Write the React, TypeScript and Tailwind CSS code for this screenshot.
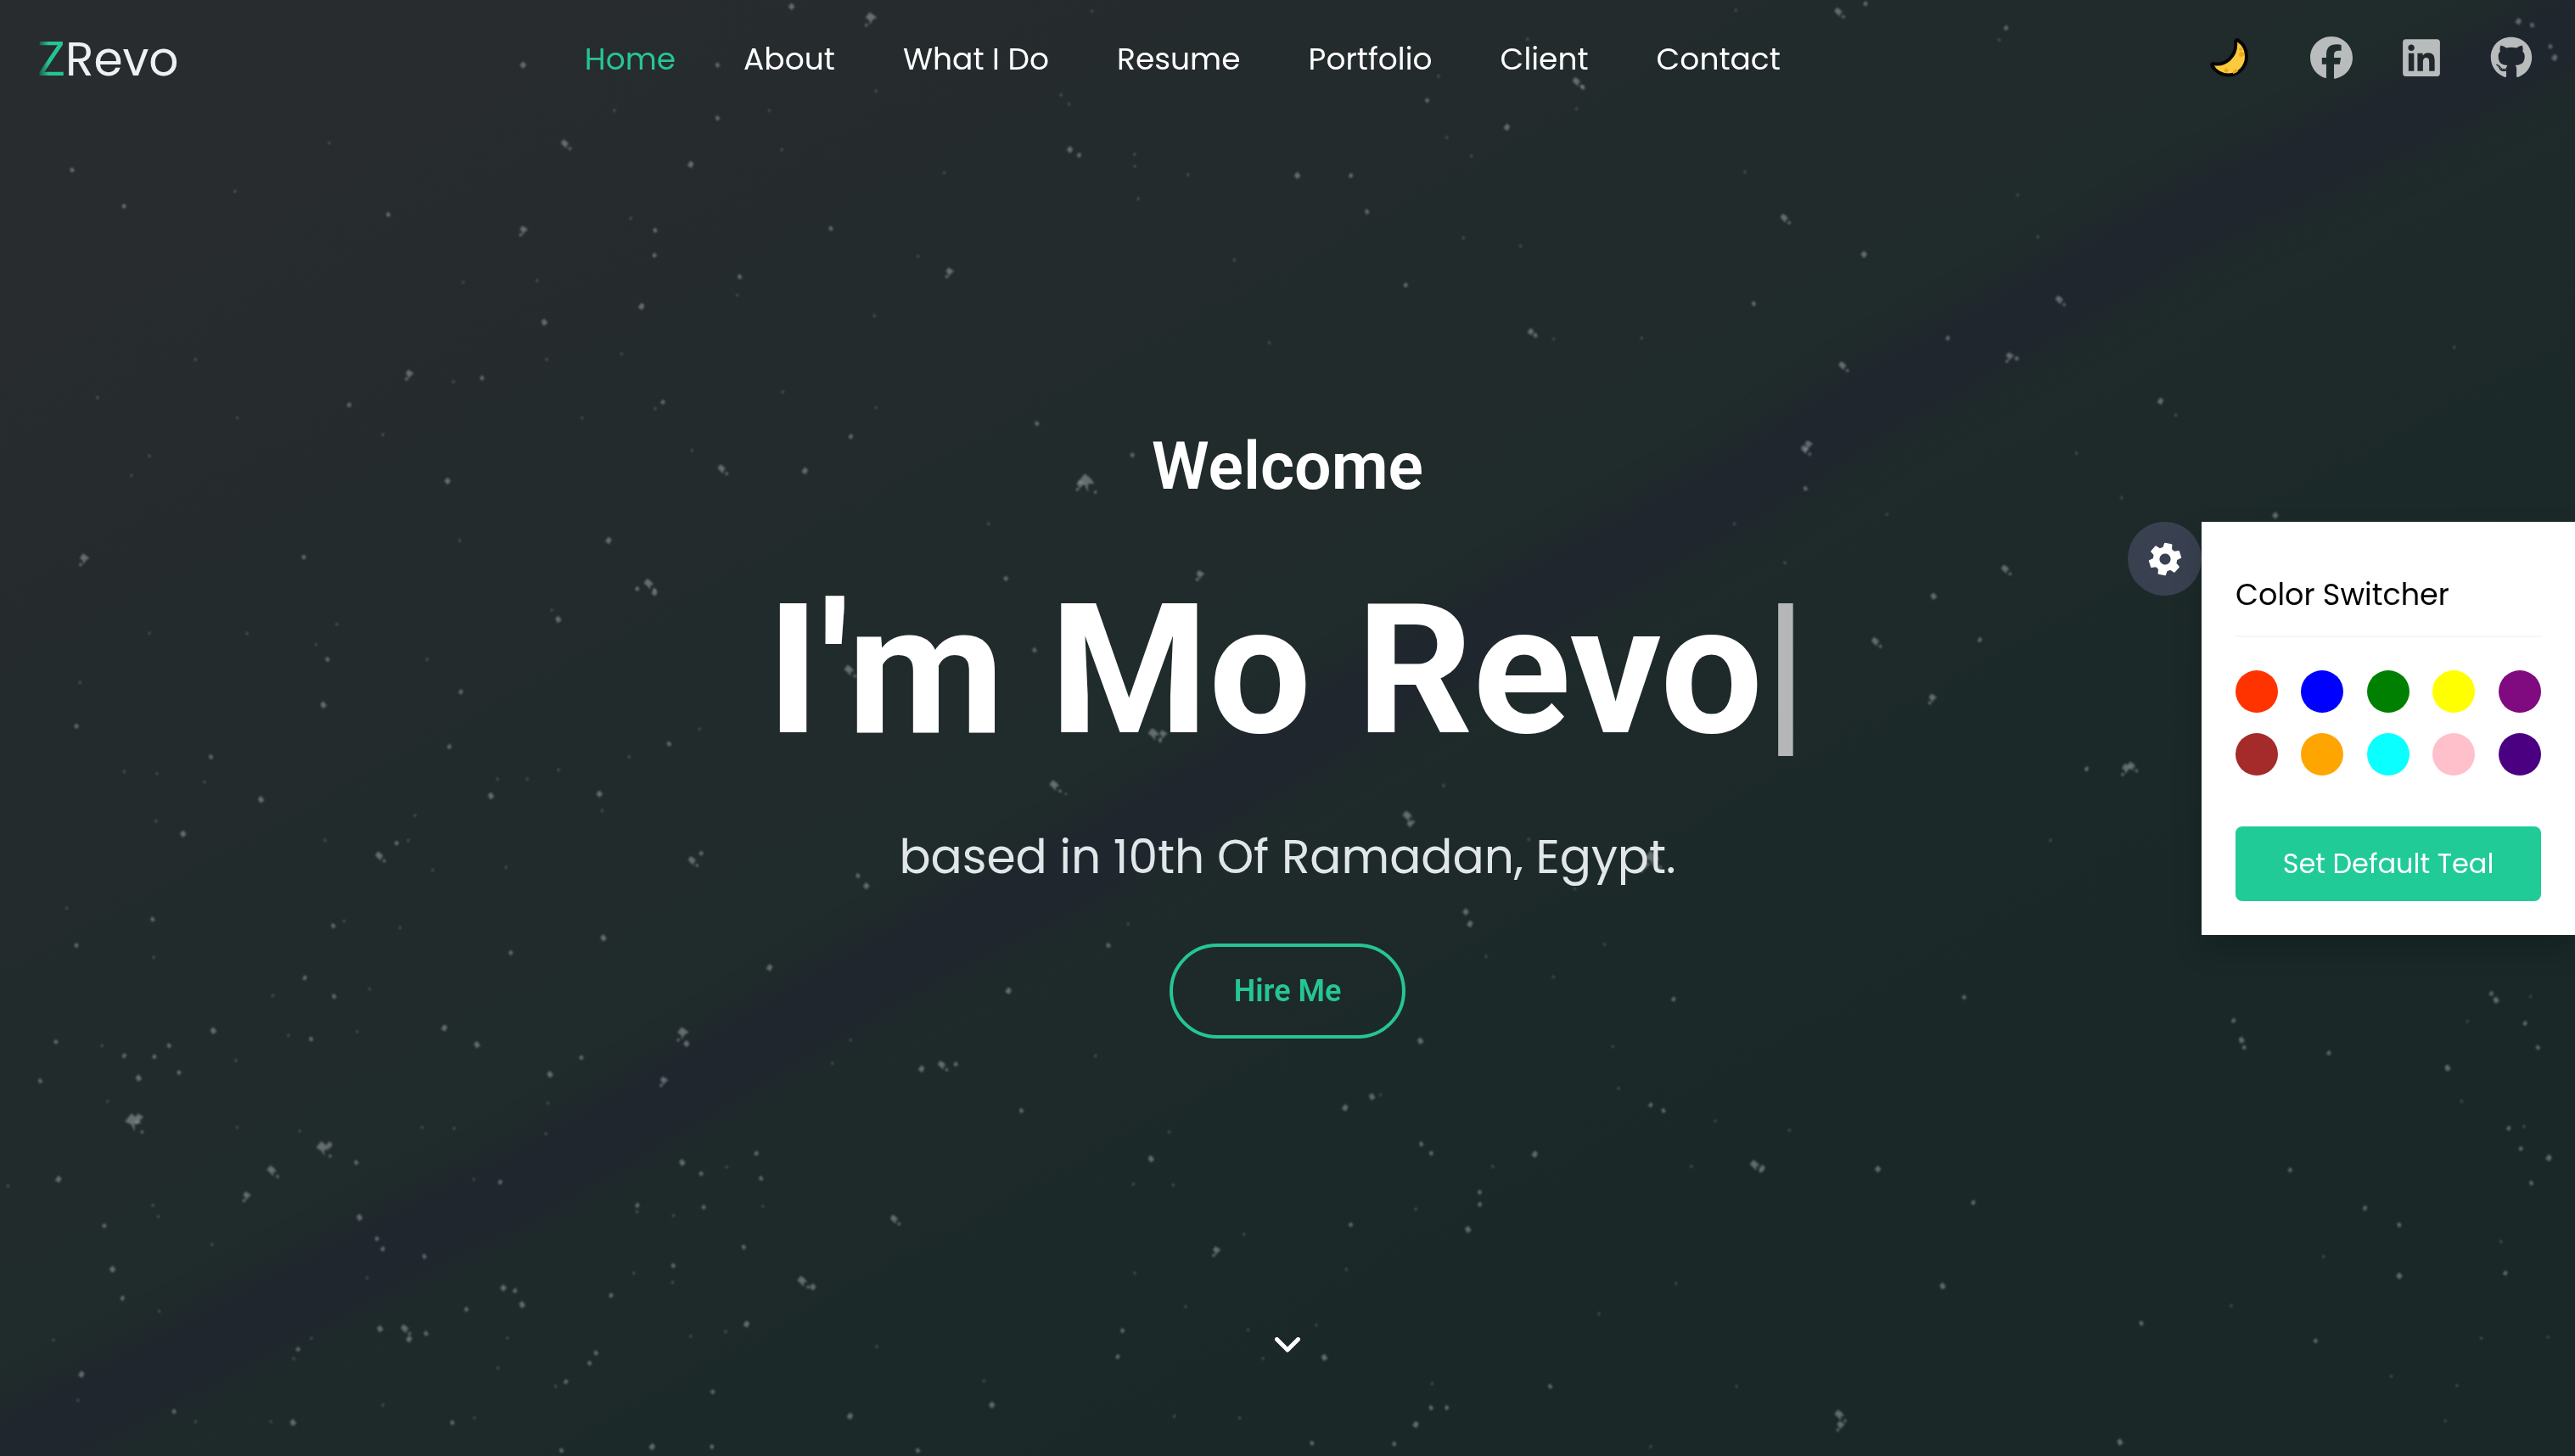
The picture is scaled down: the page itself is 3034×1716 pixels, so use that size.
import { FaGithub, FaLinkedin } from "react-icons/fa";
import { FaFacebook } from "react-icons/fa6";
import { IoSettingsSharp } from "react-icons/io5";

const body = "font-[Poppins,Inter,sans-serif] [font-feature-settings:'cv11']";
const display = "font-[Roboto,sans-serif]";

const links = ["Home", "About", "What I Do", "Resume", "Portfolio", "Client", "Contact"];

const socials = [
  { name: "Facebook", Icon: FaFacebook },
  { name: "LinkedIn", Icon: FaLinkedin },
  { name: "GitHub", Icon: FaGithub },
];

const swatches = [
  { name: "Red", fill: "bg-[#ff3300]" },
  { name: "Blue", fill: "bg-[#0000ff]" },
  { name: "Green", fill: "bg-[#008000]" },
  { name: "Yellow", fill: "bg-[#ffff00]" },
  { name: "Purple", fill: "bg-[#800a80]" },
  { name: "Brown", fill: "bg-[#a52a2a]" },
  { name: "Orange", fill: "bg-[#ffa500]" },
  { name: "Cyan", fill: "bg-[#0affff]" },
  { name: "Pink", fill: "bg-[#ffc0cb]" },
  { name: "Indigo", fill: "bg-[#4b0082]" },
];

// Each star is [x, y, radius] on a 1568 x 1568 tile; the sky is two tiles wide.
type Star = [number, number, number];

const leftStars: Star[] = [
  [88, 183, 3], [151, 222, 3], [286, 206, 2], [473, 231, 3], [401, 154, 2], [638, 248, 5], [688, 155, 5], [637, 70, 4],
  [841, 177, 4], [874, 70, 3], [964, 7, 4], [1061, 20, 7], [874, 127, 3], [937, 119, 2], [748, 119, 2], [1067, 98, 2],
  [1303, 161, 4], [1314, 167, 3], [1382, 166, 2], [1382, 179, 2], [1386, 214, 2], [1447, 188, 2], [1330, 12, 2],
  [1292, 102, 2], [1302, 112, 2], [1150, 186, 2], [952, 161, 2], [1012, 246, 3], [1118, 276, 2], [1157, 293, 5],
  [798, 248, 3], [797, 275, 3], [768, 235, 2], [901, 298, 3], [898, 318, 2], [781, 330, 4], [663, 347, 4], [564, 304, 2],
  [654, 302, 2], [499, 403, 5], [587, 407, 3], [552, 411, 2], [666, 387, 2], [757, 381, 2], [238, 387, 2], [119, 428, 2],
  [289, 450, 2], [425, 436, 3], [182, 491, 2], [160, 512, 2], [807, 433, 3], [798, 440, 2], [709, 450, 2], [953, 422, 2],
  [1065, 340, 2], [1067, 439, 2], [1036, 470, 3], [1263, 456, 3], [1379, 490, 3], [1503, 280, 2], [1546, 369, 2],
  [545, 518, 4], [466, 468, 2], [843, 485, 2], [879, 505, 5], [980, 507, 4], [1323, 520, 10], [1316, 522, 5],
  [741, 582, 4], [560, 582, 2], [370, 600, 3], [103, 602, 6], [790, 629, 6], [776, 634, 3], [797, 638, 4], [1204, 564, 2],
  [1225, 623, 3], [1462, 619, 5], [680, 667, 4], [672, 657, 2], [410, 672, 2], [301, 682, 2], [182, 682, 2], [520, 710, 2],
  [399, 710, 3], [385, 694, 2], [561, 745, 3], [394, 759, 4], [93, 782, 3], [97, 735, 2], [257, 815, 3], [249, 842, 2],
  [547, 804, 3], [815, 801, 3], [852, 785, 2], [766, 815, 2], [606, 839, 2], [642, 839, 2], [680, 829, 2], [598, 857, 4],
  [730, 855, 4], [733, 873, 2], [318, 861, 4], [191, 833, 2], [151, 831, 2], [190, 884, 2], [223, 898, 4], [505, 878, 2],
  [462, 922, 5], [483, 908, 3], [497, 905, 2], [396, 905, 2], [527, 937, 2], [616, 934, 2], [843, 927, 5], [854, 919, 3],
  [1034, 722, 6], [1260, 700, 3], [1405, 791, 7], [1417, 791, 5], [1284, 846, 6], [1298, 855, 2], [81, 978, 2],
  [186, 990, 3], [93, 1018, 3], [187, 1031, 2], [406, 997, 3], [419, 992, 2], [487, 999, 2], [735, 1010, 4], [622, 1026, 3],
  [937, 1042, 4], [1045, 943, 3], [1055, 954, 4], [1228, 1067, 4], [1350, 1018, 3], [1374, 995, 2], [371, 1053, 3],
  [407, 1073, 3], [450, 1065, 2], [332, 1072, 2], [260, 1110, 4], [68, 1122, 3], [124, 1126, 2], [206, 1126, 3],
  [188, 1138, 3], [151, 1137, 3], [169, 1161, 4], [218, 1155, 3], [351, 1115, 2], [379, 1119, 3], [435, 1111, 2],
  [541, 1107, 4], [581, 1125, 4], [162, 1209, 10], [170, 1204, 5], [49, 1164, 3], [131, 1186, 2], [287, 1142, 2],
  [832, 1113, 7], [836, 1124, 4], [809, 1164, 5], [670, 1157, 4], [708, 1139, 3], [667, 1188, 2], [1014, 1145, 2],
  [1036, 1120, 2], [1122, 1151, 4], [1147, 1147, 5], [1164, 1146, 3], [1334, 1137, 2], [1244, 1196, 3], [393, 1237, 8],
  [401, 1233, 4], [434, 1252, 3], [365, 1218, 2], [331, 1261, 6], [301, 1288, 5], [289, 1214, 2], [71, 1270, 4],
  [10, 1277, 2], [127, 1320, 3], [186, 1298, 2], [193, 1310, 2], [137, 1367, 4], [258, 1340, 2], [438, 1311, 4],
  [459, 1334, 3], [466, 1345, 3], [517, 1353, 3], [514, 1214, 2], [553, 1215, 2], [665, 1221, 2], [577, 1270, 2],
  [609, 1273, 3], [831, 1252, 4], [854, 1264, 3], [921, 1242, 3], [927, 1269, 3], [885, 1257, 2], [776, 1298, 3],
  [776, 1305, 2], [857, 1300, 3], [820, 1309, 2], [906, 1343, 3], [929, 1299, 2], [1089, 1313, 5], [1402, 1248, 4],
  [1424, 1219, 2], [1380, 1275, 2], [1429, 1276, 2], [1482, 1347, 5], [1515, 1329, 2], [1382, 1371, 2], [613, 1387, 4],
  [627, 1390, 3], [636, 1405, 4], [568, 1410, 3], [744, 1395, 3], [772, 1371, 2], [820, 1363, 3], [819, 1381, 2],
  [977, 1380, 6], [990, 1386, 4], [909, 1426, 4], [463, 1431, 4], [493, 1431, 5], [498, 1442, 4], [519, 1436, 3],
  [447, 1376, 2], [149, 1398, 3], [194, 1412, 2], [65, 1443, 2], [99, 1480, 4], [95, 1508, 2], [363, 1453, 3],
  [379, 1441, 2], [358, 1463, 2], [212, 1520, 3], [238, 1531, 2], [357, 1532, 4], [330, 1531, 2], [466, 1513, 2],
  [551, 1532, 3], [578, 1527, 2], [689, 1488, 3], [677, 1493, 2], [618, 1441, 2], [606, 1473, 2], [726, 1457, 3],
  [718, 1468, 3], [841, 1439, 2], [884, 1434, 2], [868, 1499, 3], [794, 1558, 4], [684, 1562, 3], [867, 1558, 3],
  [1035, 1525, 4], [1068, 1450, 2], [1208, 1513, 4], [1198, 1487, 2], [1118, 1562, 3], [1367, 1433, 3], [1361, 1461, 3],
  [1444, 1407, 2], [1520, 1432, 2], [1430, 1525, 2], [1510, 1527, 2], [1538, 1463, 2],
];

const rightStars: Star[] = [
  [671, 13, 5], [704, 4, 3], [875, 30, 3], [867, 43, 2], [546, 11, 2], [292, 42, 2], [184, 82, 2], [170, 108, 3],
  [352, 88, 5], [360, 94, 3], [352, 117, 2], [267, 137, 4], [194, 148, 2], [12, 189, 4], [77, 189, 3], [97, 228, 3],
  [224, 168, 2], [214, 256, 2], [284, 265, 2], [144, 307, 3], [296, 357, 4], [302, 361, 3], [324, 365, 2], [431, 364, 2],
  [605, 235, 5], [702, 274, 4], [557, 185, 2], [568, 327, 3], [676, 394, 5], [804, 364, 3], [914, 255, 2], [889, 210, 2],
  [940, 323, 5], [880, 384, 5], [888, 386, 3], [1063, 432, 4], [1082, 447, 2], [1421, 374, 2], [1499, 23, 4],
  [1516, 27, 3], [1538, 50, 3], [1543, 62, 4], [961, 488, 2], [635, 479, 5], [630, 484, 5], [631, 526, 3], [730, 554, 2],
  [544, 564, 2], [1016, 536, 2], [1203, 555, 4], [874, 613, 5], [787, 642, 4], [716, 691, 5], [843, 689, 3],
  [606, 606, 2], [786, 752, 5], [973, 828, 3], [1022, 828, 6], [1028, 825, 5], [929, 905, 2], [146, 879, 6],
  [149, 887, 4], [190, 846, 2], [294, 904, 2], [444, 925, 9], [436, 932, 6], [350, 957, 2], [217, 982, 4], [222, 995, 4],
  [242, 1030, 2], [386, 1017, 2], [470, 1076, 3], [324, 1052, 2], [396, 1127, 2], [403, 1172, 2], [162, 1121, 4],
  [824, 1074, 3], [70, 1193, 4], [103, 1181, 4], [113, 1179, 2], [442, 1190, 3], [458, 1196, 3], [521, 1207, 2],
  [611, 1217, 2], [163, 1232, 3], [175, 1242, 3], [301, 1243, 4], [250, 1256, 2], [234, 1284, 3], [234, 1297, 3],
  [220, 1324, 4], [77, 1319, 3], [156, 1302, 2], [72, 1367, 2], [569, 1255, 6], [578, 1258, 4], [492, 1256, 2],
  [719, 1259, 4], [835, 1295, 3], [798, 1385, 4], [473, 1382, 2], [379, 1415, 2], [1040, 1425, 3], [1252, 1444, 3],
  [1149, 1406, 2], [1014, 1553, 4], [672, 1524, 6], [674, 1535, 5], [45, 1462, 4], [35, 1427, 2], [176, 1490, 2],
  [175, 1516, 3], [194, 1516, 3], [156, 1534, 4], [30, 1554, 3], [130, 1555, 3], [442, 1558, 2], [320, 1493, 3],
  [547, 1493, 2], [1152, 1099, 3], [1162, 1120, 4], [1165, 1128, 3], [1466, 1070, 3], [1472, 1077, 4], [1437, 1100, 2],
  [1507, 1102, 3], [1523, 1128, 3], [1514, 1073, 2], [1268, 1134, 3], [1413, 1150, 4], [1430, 1186, 2], [1487, 1215, 3],
  [1506, 1213, 2], [1502, 1237, 3], [1536, 1247, 4], [1515, 1274, 3], [1221, 1260, 3], [1312, 1301, 3], [1354, 1319, 3],
  [1354, 1374, 4], [1483, 1371, 3], [1454, 1441, 2], [1535, 1440, 2], [1424, 1492, 2], [1478, 1337, 2], [1410, 1530, 2],
  [1344, 1482, 2], [1262, 1353, 2],
];

// Small stars are single specks; larger ones are ragged clumps of specks.
function starPath([x, y, r]: Star, i: number) {
  if (r < 5) {
    const lean = (i % 3) - 1;
    return `M${x} ${y - r}L${x + r} ${y - lean}L${x + lean} ${y + r}L${x - r} ${y + lean}Z`;
  }
  const side = i % 2 === 0 ? 1 : -1;
  return (
    `M${x - r} ${y - 1}L${x - 2} ${y - r}L${x + r / 2} ${y - r / 2}L${x + r} ${y + side}` +
    `L${x + 2} ${y + 1}L${x + side * 2} ${y + r}L${x - 2} ${y + 2}Z` +
    `M${x + side * r} ${y + r - 2}l3 1l-1 3l-3 -1Z`
  );
}

function Stars({ stars, x }: { stars: Star[]; x: number }) {
  return (
    <svg x={x} width="1517" height="1716" viewBox="0 0 1568 1568" preserveAspectRatio="none">
      {stars.map((star, i) => (
        <path key={i} d={starPath(star, i)} opacity={star[2] < 3 ? 0.3 : 0.48} />
      ))}
    </svg>
  );
}

function NightSky() {
  return (
    <svg
      aria-hidden="true"
      className="absolute inset-0 -z-10 size-full"
      viewBox="0 0 3034 1716"
      preserveAspectRatio="xMidYMid slice"
    >
      <defs>
        <linearGradient id="sky" gradientUnits="userSpaceOnUse" x1="500" y1="-100" x2="1500" y2="1716">
          <stop offset="0" stopColor="#292c2f" />
          <stop offset="0.3" stopColor="#242b2d" />
          <stop offset="0.6" stopColor="#202b2b" />
          <stop offset="1" stopColor="#1a2828" />
        </linearGradient>
        <filter id="haze" x="-10%" y="-10%" width="120%" height="120%" colorInterpolationFilters="sRGB">
          <feGaussianBlur stdDeviation="18" />
        </filter>
        <filter id="glow">
          <feGaussianBlur stdDeviation="1.3" />
        </filter>
      </defs>
      <rect width="3034" height="1716" fill="url(#sky)" />
      <path
        d="M-60 1745 174 1625 484 1460 629 1390 871 1245 1045 1140 1258 1030 1451 918 1807 710 2059 572 2194 480 2388 372 2581 258 2775 164 3100 0"
        fill="none"
        stroke="#20262f"
        strokeWidth="96"
        strokeLinejoin="round"
        opacity="0.9"
        filter="url(#haze)"
      />
      <g fill="#b0b6b6" filter="url(#glow)">
        <Stars stars={leftStars} x={0} />
        <Stars stars={rightStars} x={1517} />
      </g>
    </svg>
  );
}

function Moon() {
  return (
    <svg viewBox="0 0 46 46" className="size-[46px]" aria-hidden="true">
      <path
        d="M33 2.500c6 4 10 11 10 19C43 34 33.500 43.500 22 43.500c-8.500 0-16-4.500-19.500-11-.8-1.500.3-2.800 2-2.400 6 1.300 13-.6 18-5.100 5.500-5 8.200-12.500 7.600-20C30 2.500 31.600 1.600 33 2.500Z"
        fill="#fdca3d"
        stroke="#060606"
        strokeWidth="4"
        strokeLinejoin="round"
      />
      <g fill="#f0a91c">
        <circle cx="36" cy="13" r="2" />
        <circle cx="37" cy="19" r="3" />
        <circle cx="19" cy="38" r="2.500" />
        <path d="M27 40c0-4 6-5 6-1-1.500 1.500-4 2.500-6 3Z" />
      </g>
    </svg>
  );
}

function Header() {
  return (
    <header className="flex h-[136px] items-center justify-between pr-[50px] pl-11">
      <a href="#home" className={`${body} flex pt-1 text-[55px] leading-[64px] text-[#eef0f2]`}>
        <span className="bg-linear-to-r from-[#15493b] via-[#25c593] via-40% to-[#25c593] bg-clip-text font-['Liberation_Sans_Narrow',Roboto,sans-serif] text-transparent">
          Z
        </span>
        Revo
      </a>
      <nav className={`${body} mr-7 flex gap-20 pt-1 text-[36px] leading-[56px]`}>
        {links.map((label) => (
          <a
            key={label}
            href={`#${label.toLowerCase().replaceAll(" ", "-")}`}
            className={label === "Home" ? "text-[#26c594]" : "text-white"}
          >
            {label}
          </a>
        ))}
      </nav>
      <div className="flex items-center gap-14 text-[50px] text-[#b8bcbc]">
        <button type="button" aria-label="Toggle dark mode" className="mr-4">
          <Moon />
        </button>
        {socials.map(({ name, Icon }) => (
          <a key={name} href={`#${name.toLowerCase()}`} aria-label={name}>
            <Icon />
          </a>
        ))}
      </div>
    </header>
  );
}

function Hero() {
  return (
    <main className="flex flex-1 flex-col items-center pt-[358px] text-center text-white">
      <p className={`${display} text-[77px] leading-[112px] font-semibold`}>Welcome</p>
      <h1 className={`${display} mt-[56px] text-[214px] leading-[256px] font-bold`}>
        I'm Mo Revo<span className="font-semibold text-[#b4b6b8]">|</span>
      </h1>
      <p className={`${body} mt-[50px] text-[55px] leading-[84px] text-[#e1e6e8]`}>
        based in 10th Of Ramadan, Egypt.
      </p>
      <button
        type="button"
        className={`${display} mt-[60px] rounded-full border-4 border-[#26c594] px-[72px] py-7 text-[36px] leading-[48px] font-semibold text-[#26c594]`}
      >
        Hire Me
      </button>
      <a href="#about" aria-label="Scroll down" className="mt-auto mb-[122px]">
        <svg viewBox="0 0 30 18" className="h-[18px] w-[30px]" fill="none" aria-hidden="true">
          <path d="m2.500 2.500 12.500 12.500L27.500 2.500" stroke="white" strokeWidth="5" strokeLinecap="round" strokeLinejoin="round" />
        </svg>
      </a>
    </main>
  );
}

function ColorSwitcher() {
  return (
    <aside className="absolute top-[615px] right-0 flex items-start">
      <button
        type="button"
        aria-label="Close color switcher"
        className="flex size-[87px] items-center justify-center rounded-full bg-[#394150] text-white"
      >
        <IoSettingsSharp className="size-[42px] rotate-12" />
      </button>
      <section className="w-[440px] bg-white p-10 shadow-[0_16px_32px_rgba(0,0,0,0.18)]">
        <h2 className={`${body} border-b-2 border-[#f6f6f6] pt-4 pb-[18px] text-[35px] leading-[60px] text-black`}>
          Color Switcher
        </h2>
        <div className="grid grid-cols-5 gap-x-[27px] gap-y-6 pt-[39px] pb-10">
          {swatches.map(({ name, fill }) => (
            <button key={name} type="button" aria-label={name} className={`${fill} size-[50px] rounded-full`} />
          ))}
        </div>
        <button
          type="button"
          className={`${body} mt-5 w-full rounded-lg bg-[#20cb98] py-5 text-[32px] leading-[48px] text-white`}
        >
          Set Default Teal
        </button>
      </section>
    </aside>
  );
}

export default function App() {
  return (
    <div className="relative isolate flex min-h-screen flex-col overflow-hidden bg-[#202b2c]">
      <NightSky />
      <Header />
      <Hero />
      <ColorSwitcher />
    </div>
  );
}
